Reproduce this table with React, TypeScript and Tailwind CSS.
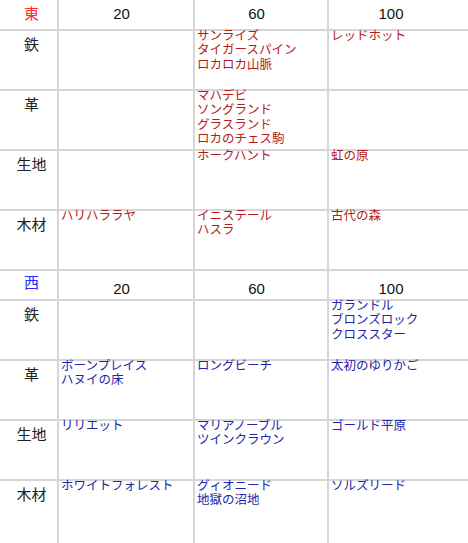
import React from "react";

type Row = { label: string; cells: string[][] };

const east: Row[] = [
  { label: "鉄", cells: [[], ["サンライズ", "タイガースパイン", "ロカロカ山脈"], ["レッドホット"]] },
  { label: "革", cells: [[], ["マハデビ", "ソングランド", "グラスランド", "ロカのチェス駒"], []] },
  { label: "生地", cells: [[], ["ホークハント"], ["虹の原"]] },
  { label: "木材", cells: [["ハリハララヤ"], ["イニステール", "ハスラ"], ["古代の森"]] },
];

const west: Row[] = [
  { label: "鉄", cells: [[], [], ["ガランドル", "ブロンズロック", "クロススター"]] },
  { label: "革", cells: [["ボーンプレイス", "ハヌイの床"], ["ロングビーチ"], ["太初のゆりかご"]] },
  { label: "生地", cells: [["リリエット"], ["マリアノーブル", "ツインクラウン"], ["ゴールド平原"]] },
  { label: "木材", cells: [["ホワイトフォレスト"], ["グィオニード", "地獄の沼地"], ["ソルズリード"]] },
];

function Label({ text }: { text: string }) {
  return (
    <div className="bg-white flex justify-center pl-[6px] pt-[4px] text-[15px] leading-[20px] text-[#222]">
      {text}
    </div>
  );
}

function Cell({ lines, color }: { lines: string[]; color: string }) {
  return (
    <div className="bg-white pl-[2px] text-[12.5px] leading-[14.4px]" style={{ color }}>
      <div className="-mt-[2px]">
        {lines.map((l, i) => (
          <div key={i} className="whitespace-nowrap">
            {l}
          </div>
        ))}
      </div>
    </div>
  );
}

function Header({ title, titleColor, second }: { title: string; titleColor: string; second?: boolean }) {
  return (
    <>
      <div
        className={`bg-white flex items-center justify-center pl-[6px] text-[15px] ${second ? "pb-[3px]" : ""}`}
        style={{ color: titleColor }}
      >
        {title}
      </div>
      <div className={`bg-white flex items-center justify-center pr-[9px] text-[15px] text-[#111] ${second ? "pt-[8px]" : ""}`}>20</div>
      <div className={`bg-white flex items-center justify-center pr-[9px] text-[15px] text-[#111] ${second ? "pt-[8px]" : ""}`}>60</div>
      <div className={`bg-white flex items-center justify-center pr-[15px] text-[15px] text-[#111] ${second ? "pt-[8px]" : ""}`}>100</div>
    </>
  );
}

export default function App() {
  const red = "#b31b1b";
  const blue = "#2424aa";
  return (
    <div className="w-[468px] h-[543px] overflow-hidden bg-white font-['Liberation_Sans','Noto_Sans_CJK_JP',sans-serif]">
      <div className="grid grid-cols-[57px_134px_132px_1fr] grid-rows-[29px_58px_58px_58px_58px_28px_58px_58px_58px_62px] gap-[2px] bg-[#d6d6d6]">
        <Header title="東" titleColor="#ff2a2a" />
        {east.map((r, i) => (
          <React.Fragment key={"e" + i}>
            <Label text={r.label} />
            {r.cells.map((c, j) => (
              <Cell key={j} lines={c} color={red} />
            ))}
          </React.Fragment>
        ))}
        <Header title="西" titleColor="#2a2aff" second />
        {west.map((r, i) => (
          <React.Fragment key={"w" + i}>
            <Label text={r.label} />
            {r.cells.map((c, j) => (
              <Cell key={j} lines={c} color={blue} />
            ))}
          </React.Fragment>
        ))}
      </div>
    </div>
  );
}
